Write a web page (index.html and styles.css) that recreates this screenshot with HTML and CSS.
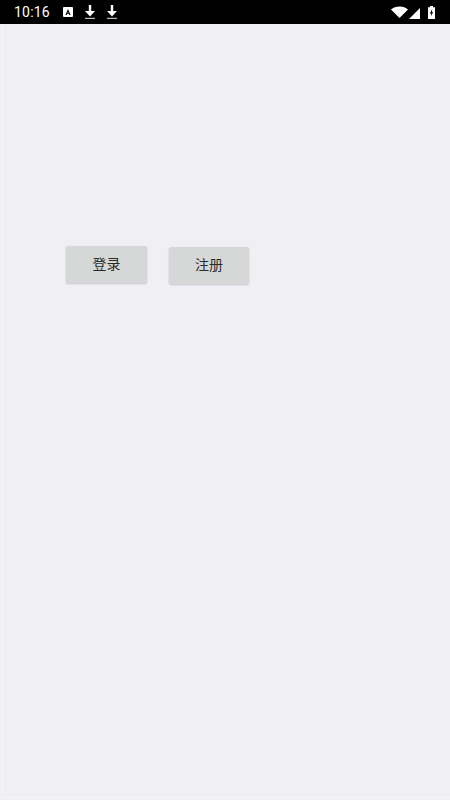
FILE: index.html
```html
<!DOCTYPE html>
<html lang="zh">
<head>
<meta charset="utf-8">
<title>登录</title>
<link rel="stylesheet" href="styles.css">
</head>
<body>
<div class="status">
  <span class="time">10:16</span>
  <svg class="ic-a" width="10" height="10" viewBox="0 0 10 10"><path fill="#fff" fill-rule="evenodd" d="M1 0h8a1 1 0 0 1 1 1v8a1 1 0 0 1-1 1H1a1 1 0 0 1-1-1V1a1 1 0 0 1 1-1zM5 2 2.400 8h1.300l.5-1.300h1.600L6.300 8h1.300L5 2zm0 2.600.5 1.200h-1L5 4.600z"/></svg>
  <svg class="ic-d" width="10" height="14" viewBox="0 0 10 14"><path fill="#fff" d="M3.800 0h2.400v6H10l-5 5.500L0 6h3.800z"/><path fill="#bbb" d="M0 12.800h10V14H0z"/></svg>
  <svg class="ic-d" width="10" height="14" viewBox="0 0 10 14"><path fill="#fff" d="M3.800 0h2.400v6H10l-5 5.500L0 6h3.800z"/><path fill="#bbb" d="M0 12.800h10V14H0z"/></svg>
  <span class="spacer"></span>
  <svg class="ic-w" width="17" height="12" viewBox="0 0 17 12"><path fill="#fff" d="M0 3.500C2.200 1.500 5.200.5 8.500.5s6.300 1 8.500 3l-8.500 8.500z"/></svg>
  <svg class="ic-s" width="11" height="11" viewBox="0 0 11 11"><path fill="#fff" d="M11 0v11H0z"/></svg>
  <svg class="ic-b" width="7" height="13" viewBox="0 0 7 13"><path fill="#fff" fill-rule="evenodd" d="M2 0h3v1.200h2V13H0V1.200h2zM4.200 3 1.900 7.500h1.300L2.800 10.500 5.100 6H3.900z"/></svg>
</div>
<main class="page">
  <div class="inner">
    <div class="buttons">
      <button class="btn">登录</button>
      <button class="btn second">注册</button>
    </div>
  </div>
</main>
</body>
</html>
```
FILE: styles.css
```css
html, body {
  margin: 0;
  padding: 0;
}
body {
  width: 450px;
  height: 800px;
  overflow: hidden;
  display: flex;
  flex-direction: column;
  font-family: "Roboto", "Noto Sans CJK SC", sans-serif;
  background: #f0eff4;
}
.status {
  height: 24px;
  flex: none;
  background: #000;
  color: #fff;
  display: flex;
  align-items: center;
  padding: 0 15px 0 14px;
  box-sizing: border-box;
}
.time {
  font-size: 14px;
  letter-spacing: 0.2px;
  margin-right: 13px;
}
.ic-d {
  margin-left: 12px;
}
.spacer {
  flex: 1;
}
.ic-s {
  margin-left: 1px;
  margin-top: 2px;
}
.ic-b {
  margin-left: 8px;
}
.page {
  flex: 1;
  display: flex;
  background: #f0eff4;
  padding: 0 0 2px 2px;
}
.inner {
  flex: 1;
  border-left: 1px solid #f6f5f9;
  border-bottom: 1px solid #f6f5f9;
  padding-top: 222px;
  padding-left: 63px;
}
.buttons {
  display: flex;
  align-items: flex-start;
  gap: 22px;
}
.btn {
  width: 81px;
  height: 37px;
  border: 0;
  border-radius: 2px;
  padding: 0 0 4px;
  background: #d6d7d7;
  box-shadow: 0 1px 2px rgba(0, 0, 0, 0.18);
  color: #2a2a2a;
  font-family: inherit;
  font-size: 14px;
}
.second {
  width: 80px;
  margin-top: 1px;
}
```
